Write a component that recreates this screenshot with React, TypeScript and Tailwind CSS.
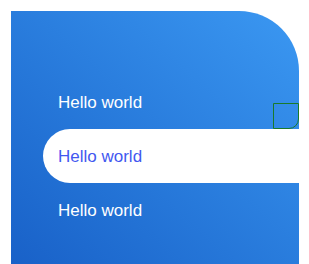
import React from "react";

const items = ["Hello world", "Hello world", "Hello world"];

export default function App() {
  const active = 1;
  return (
    <div className="h-[264px] w-[309px] overflow-hidden bg-white pl-[11px] pt-[11px] font-['Liberation_Sans',Arial,sans-serif]">
      <nav className="h-[253px] w-[288px] rounded-tr-[60px] bg-linear-to-tr from-[#1961c8] to-[#3b98f2] pt-[64px] pl-[32px]">
        <ul>
          {items.map((label, i) => (
            <li
              key={i}
              className={
                i === active
                  ? "relative flex h-[54px] items-center rounded-l-[27px] bg-white pl-[15px] pt-[2px] text-[17px] text-[#4258f0]"
                  : "flex h-[54px] items-center pl-[15px] pt-[2px] text-[17px] text-white"
              }
            >
              {label}
              {i === active && (
                <span className="absolute right-0 top-[-26px] h-[26px] w-[26px] rounded-br-[10px] border border-[#1a7a2a]" />
              )}
            </li>
          ))}
        </ul>
      </nav>
    </div>
  );
}
